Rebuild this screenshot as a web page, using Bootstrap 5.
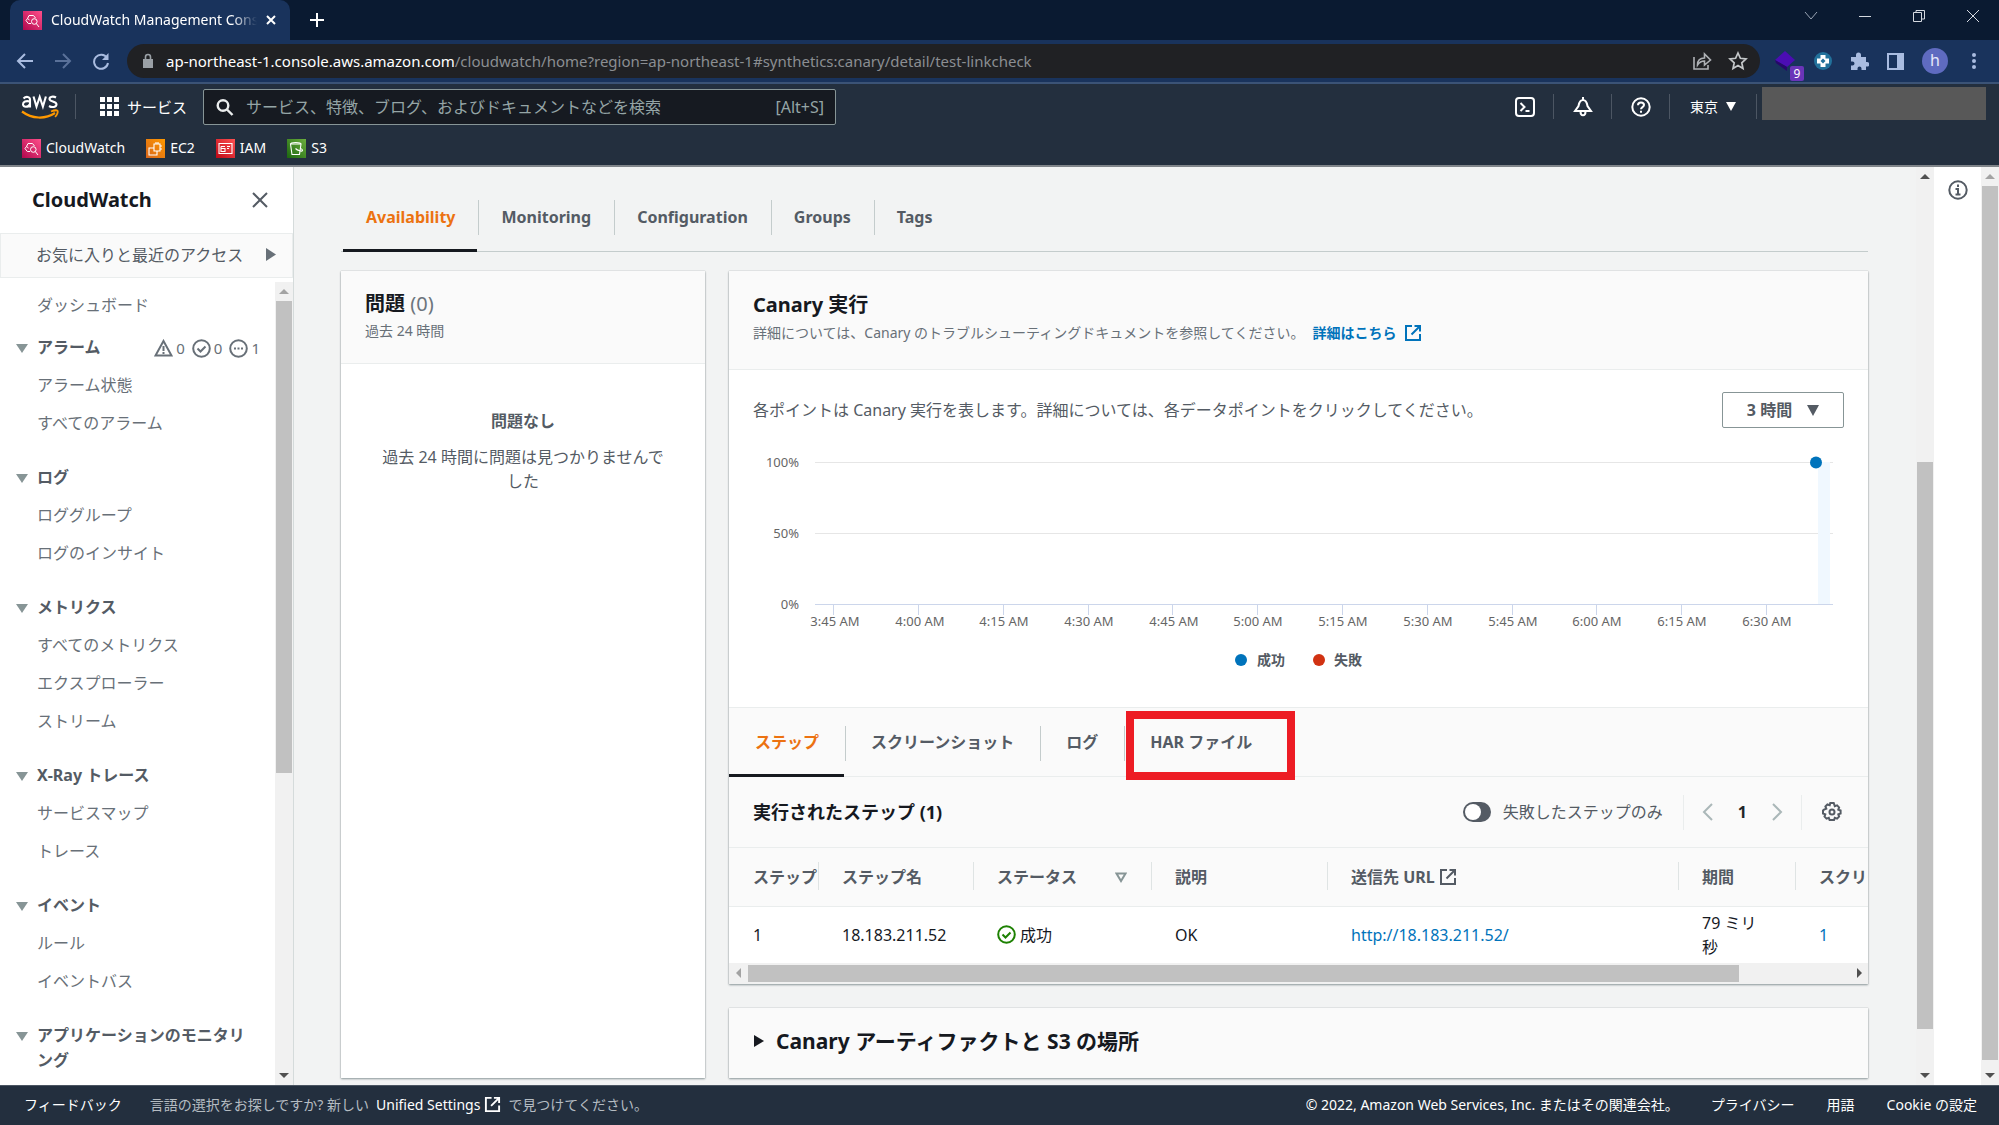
<!DOCTYPE html>
<html lang="ja">
<head>
<meta charset="utf-8">
<meta name="viewport" content="width=device-width, initial-scale=1">
<title>CloudWatch Management Console</title>
<link href="https://cdn.jsdelivr.net/npm/bootstrap@5.3.0/dist/css/bootstrap.min.css" rel="stylesheet">
<style>
body{height:100vh;overflow:hidden;font:16px/24px "Noto Sans","Noto Sans CJK JP",sans-serif;color:#545b64;background:#f2f3f3}
svg{display:block;flex:none}
a{text-decoration:none;color:inherit}
button{background:none;border:0;padding:0;color:inherit}
.tabstrip{height:40px;background:#0a1a31;color:#fff}
.btab{width:280px;height:40px;margin-left:10px;padding:0 13px;background:#19335c;border-radius:10px 10px 0 0;font-size:14px}
.btitle{width:206px;margin-left:9px;overflow:hidden;white-space:nowrap;-webkit-mask-image:linear-gradient(90deg,#000 88%,transparent)}
.winctl{gap:36px;padding-right:17px;color:#d5d9e0}
.urlrow{height:44px;background:#19335c;border-bottom:2px solid #3b5376;color:#a9bce0}
.navbtns{width:127px;padding-left:16px;gap:20px}
.urlpill{height:34px;border-radius:17px;background:#202124;color:#8b8e92;padding:0 12px 0 15px;font-size:15px}
.exts{width:239px;padding:0 17px 0 14px}
.extbadge{right:-8px;bottom:-9px;width:14px;height:15px;background:#6a35b8;color:#fff;font-size:12px;line-height:15px;border-radius:2px;text-align:center}
.avatar{width:26px;height:26px;border-radius:50%;background:#5f6bc0;color:#e6e8fa;line-height:25px;text-align:center}
.awsnav{height:47px;background:#232f3e;color:#fff;padding:0 13px 2px 21px}
.vsep{width:1px;height:25px;background:#4c5663}
.svc{font-size:15px}
.searchbox{width:633px;height:36px;margin-left:16px;border:1px solid #879596;border-radius:2px;background:#161a21;color:#95a5a6;padding:0 11px 0 12px}
.searchbox input{background:none;border:0;outline:0;color:inherit;padding:0}
.searchbox input::placeholder{color:#95a5a6;opacity:1}
.navicon{width:58px;border-right:1px solid #4c5663;height:25px}
.region{width:87px;font-size:14px;border-right:1px solid #4c5663;height:25px}
.masked{width:224px;height:33px;background:#585858;margin:0 0 6px 5px}
.favs{height:36px;background:#232f3e;border-bottom:2px solid #7f8489;color:#fff;font-size:14px;gap:21px;padding:0 22px}
.favs a{gap:5px}
.svcicon{width:19px;height:19px}
.side{width:294px;background:#fff;border-right:1px solid #d5dbdb}
.sidehead{height:66px;padding:0 25px 0 32px;color:#16191f;font-size:20px;font-weight:700}
.recent{height:45px;border:1px solid #eaeded;background:#fafafa;padding:0 16px 2px 35px}
.menu{padding:4px 0 0 37px;overflow:hidden}
.menu a,.menu .grp{display:block;height:38px;line-height:38px}
.menu a{color:#687078}
.menu section{margin-bottom:16px}
.grp{font-weight:700;font-size:16px;margin:0;position:relative;white-space:nowrap}
.grp::before{content:"";position:absolute;left:-21px;top:16px;border:6px solid transparent;border-top:9px solid #879596;border-bottom:0}
.menu .grp.tall{height:64px;line-height:25px;padding-top:7px;width:220px;white-space:normal}
.alarms{gap:3px;font-weight:400;font-size:15px;color:#687078;margin-right:15px;padding-top:2px}
.sbar{width:18px;background:#f1f1f1;flex:none}
.thumb{background:#c1c1c1;margin:0 1px}
.aup,.adn,.alf,.art{flex:none;width:18px;height:19px;display:flex;align-items:center;justify-content:center}
.aup::before,.adn::before,.alf::before,.art::before{content:"";border:5px solid transparent}
.aup::before{border-bottom-color:#a3a3a3;margin-bottom:5px}
.aup.dark::before{border-bottom-color:#505050}
.adn::before{border-top-color:#505050;margin-top:5px}
.alf::before{border-right-color:#a3a3a3;margin-right:5px}
.art::before{border-left-color:#505050;margin-left:5px}
.content{padding:15px 48px 7px 47px;overflow:hidden}
.maintabs{height:70px;border-bottom:1px solid #c4cccc;padding-left:2px}
.cards{padding-top:19px}
.ptabs{height:70px;background:#fafafa;border-top:1px solid #eaeded;border-bottom:1px solid #eaeded}
.ptab{position:relative;height:70px;padding:0 23px;line-height:70px;font-weight:700;white-space:nowrap}
.ptabs .ptab{padding:0 26px;height:69px;line-height:67px}
.ptab + .ptab::before,.harwrap .ptab::before{content:"";position:absolute;left:0;top:18px;height:35px;border-left:1px solid #c4cccc}
.ptab.on{color:#ec7211}
.ptab.on::after{content:"";position:absolute;left:0;right:1px;bottom:0;height:3px;background:#16191f}
.panelbox{background:#fff;box-shadow:0 1px 2px rgba(0,28,36,.4),0 0 1px rgba(0,28,36,.25)}
.phead{background:#fafafa;border-bottom:1px solid #eaeded;padding:18px 24px 0}
.chead{padding-bottom:24px}
.h20{font-size:20px;line-height:30px;font-weight:700;color:#16191f;margin:0}
.chead .h20{padding-top:1px}
.h21{font-size:21px}
.sub14{font-size:14px;line-height:24px;color:#687078;white-space:nowrap}
.chead .sub14{padding-top:1px}
.sub14 a{margin-left:8px}
.issues{width:364px;flex:none}
.nomsg{padding:45px 36px 0}
.pbody{padding:22px 24px 29px}
.btn3{width:122px;height:36px;border:1px solid #879596;border-radius:2px;font-weight:700;gap:15px;color:#545b64}
.lnk{color:#0073bb}
.harbox{left:2px;top:3px;width:169px;height:69px;border:8px solid #ed1c24;z-index:1;pointer-events:none}
.steptitle{font-size:18px;font-weight:700;color:#16191f}
.tools{height:70px;background:#fafafa;padding:0 26px 0 24px}
.tsep{width:1px;height:35px;background:#eaeded}
.sw{appearance:none;width:28px;height:20px;border-radius:10px;background:#545b64;margin:0;display:flex;align-items:center;padding:2px}
.sw::before{content:"";width:16px;height:16px;border-radius:50%;background:#fff}
.steps{width:1270px;table-layout:fixed;margin:0;border-collapse:collapse;color:#16191f}
.steps th{height:59px;background:#fafafa;border:1px solid #eaeded;border-width:1px 0;padding:0 0 0 24px;color:#545b64;font-weight:700;position:relative;white-space:nowrap;overflow:hidden}
.steps th + th::before{content:"";position:absolute;left:0;top:14px;height:28px;border-left:1px solid #dfe4e4}
.steps td{height:56px;padding:0 0 0 24px;vertical-align:middle}
.hbar{height:21px;background:#f1f1f1}
.foot{height:40px;background:#232f3e;border-top:1px solid #4b5562;color:#fff;font-size:14px;padding:0 22px 2px 24px;white-space:nowrap}
.dimtx{color:#b5bcc2;gap:7px}
</style>
<script src="https://cdn.jsdelivr.net/npm/bootstrap@5.3.0/dist/js/bootstrap.bundle.min.js"></script>
</head>
<body class="d-flex flex-column">
<svg width="0" height="0" class="position-absolute" aria-hidden="true">
<defs>
<linearGradient id="gp" x1="0" y1="1" x2="1" y2="0"><stop stop-color="#b0084d"/><stop offset="1" stop-color="#ff4f8b"/></linearGradient>
<linearGradient id="go" x1="0" y1="1" x2="1" y2="0"><stop stop-color="#d8661b"/><stop offset="1" stop-color="#ff9900"/></linearGradient>
<linearGradient id="gr" x1="0" y1="1" x2="1" y2="0"><stop stop-color="#bd0816"/><stop offset="1" stop-color="#ff5252"/></linearGradient>
<linearGradient id="gg" x1="0" y1="1" x2="1" y2="0"><stop stop-color="#1b660f"/><stop offset="1" stop-color="#6cae3e"/></linearGradient>
<symbol id="cw" viewBox="0 0 19 19"><path fill="url(#gp)" d="M0 0h19v19H0z"/><g fill="none" stroke="#fff" stroke-width="1"><path d="M8 12.500H5.300L3 9.500l1.500-2L6 4.500h4.500L12.500 7M4.500 7.500l2 1.500"/><circle cx="11.300" cy="10.500" r="2.800"/><path d="m13.300 12.500 2.700 3.500"/></g></symbol>
<symbol id="ext" viewBox="0 0 18 18"><path d="M8 2H2v14h14v-6M10.500 2H16v5.500M16 2 7.500 10.500" fill="none" stroke="currentColor" stroke-width="2"/></symbol>
</defs>
</svg>

<div class="tabstrip d-flex align-items-center flex-shrink-0">
  <div class="btab d-flex align-items-center">
    <svg width="19" height="19"><use href="#cw"/></svg>
    <span class="btitle">CloudWatch Management Console</span>
    <button class="ms-auto" aria-label="タブを閉じる"><svg width="12" height="12"><path d="m2 2 8 8M10 2l-8 8" stroke="#fff" stroke-width="2"/></svg></button>
  </div>
  <button class="ms-3 ps-1" aria-label="新しいタブ"><svg width="14" height="14"><path d="M7 0v14M0 7h14" stroke="#fff" stroke-width="2"/></svg></button>
  <div class="winctl d-flex align-items-center ms-auto pb-2">
    <svg width="18" height="14"><path d="m3 3 6 7 6-7" fill="none" stroke="#9aa5b5"/></svg>
    <svg width="18" height="14"><path d="M3 7.500h12" stroke="currentColor"/></svg>
    <svg width="18" height="14"><path d="M3.500 3.500h8v9h-8zM6 3V1.500h8.500V10H12" fill="none" stroke="currentColor"/></svg>
    <svg width="18" height="14"><path d="m3 1 12 12M15 1 3 13" stroke="currentColor"/></svg>
  </div>
</div>

<div class="urlrow d-flex align-items-center flex-shrink-0">
  <div class="navbtns d-flex">
    <svg width="18" height="18" fill="none" stroke="currentColor" stroke-width="2"><path d="M17 9H3M9 2 2 9l7 7"/></svg>
    <svg width="18" height="18" fill="none" stroke="#5a7199" stroke-width="2"><path d="M1 9h14M9 2l7 7-7 7"/></svg>
    <svg width="18" height="18" fill="none" stroke="currentColor" stroke-width="2"><path d="M15 6a7 7 0 1 0 1 5"/><path d="M16.500 1v7H10z" fill="currentColor" stroke="none"/></svg>
  </div>
  <div class="urlpill d-flex align-items-center flex-grow-1">
    <svg width="12" height="16" class="me-2"><path d="M1 6h10v9H1z" fill="#9aa0a6"/><path d="M3.500 6V4a2.500 2.500 0 0 1 5 0v2" fill="none" stroke="#9aa0a6" stroke-width="1.600"/></svg>
    <span class="text-nowrap ms-1"><span class="text-white">ap-northeast-1.console.aws.amazon.com</span>/cloudwatch/home?region=ap-northeast-1#synthetics:canary/detail/test-linkcheck</span>
    <svg class="ms-auto" width="20" height="20" fill="none" stroke="#aeb1b5" stroke-width="1.600"><path d="M2 6v12h14v-4"/><path d="M5.500 14c0-5 3-7 7-7V3l6 6-6 5v-4c-3 0-5 1-7 4z"/></svg>
    <svg class="ms-3" width="20" height="20"><path d="m10 2 2.400 5.300 5.600.6-4.200 3.900 1.200 5.700-5-2.900-5 2.900 1.200-5.700L2 7.900l5.600-.6z" fill="none" stroke="#c4c7c9" stroke-width="1.700"/></svg>
  </div>
  <div class="exts d-flex align-items-center justify-content-between">
    <span class="position-relative"><svg width="22" height="22"><path d="m11 1 10 9-8 7L1 10z" fill="#4b0db3"/><path d="m1 10 12 7v4L2 13z" fill="#27066b"/></svg><span class="extbadge position-absolute">9</span></span>
    <svg width="18" height="18"><circle cx="9" cy="9" r="9" fill="#22719b"/><path d="M6.500 3h5v3.500H15v5h-3.500V15h-5v-3.500H3v-5h3.500z" fill="#fff"/><path d="m9 6.500 2.500 2.500L9 11.500 6.500 9z" fill="#22719b"/></svg>
    <svg width="19" height="19"><path d="M1 5h5V3a2.500 2.500 0 0 1 5 0v2h5v5h1a2.300 2.300 0 0 1 0 4.600h-1V18h-4.500v-1.500a2 2 0 0 0-4 0V18H1v-4.500h1.500a2 2 0 0 0 0-4H1z" fill="currentColor"/></svg>
    <svg width="17" height="17"><path d="M1 1h15v15H1z" fill="none" stroke="currentColor" stroke-width="2"/><path d="M10 1h6v15h-6z" fill="currentColor"/></svg>
    <span class="avatar">h</span>
    <svg width="16" height="18" fill="currentColor"><circle cx="8" cy="3" r="2"/><circle cx="8" cy="9" r="2"/><circle cx="8" cy="15" r="2"/></svg>
  </div>
</div>

<header class="awsnav d-flex align-items-center flex-shrink-0">
  <a href="#" aria-label="aws"><svg width="38" height="26" viewBox="0 0 38 26"><g fill="none" stroke="#fff" stroke-width="2.100"><path d="M2.500 4.500C5 2 9 2.500 9 5.500v8M9 7.500c-4-1-7 0-7 2.700 0 3.600 5.500 3.300 7-.2"/><path d="m12.500 2.500 3 10 3.200-9.500 3.200 9.500 3-10"/><path d="M35 3.500c-2.500-1.500-6.500-1-6.500 1.500 0 3 7 2 7 5.300 0 3-4.500 3.500-7.500 1.700"/></g><path d="M1 17.500c10 7.500 23 8 33 1.500" fill="none" stroke="#f90" stroke-width="2.200"/><path d="M30 17.500c3-1.300 6-1.200 6.500-.6.600.8-.2 4-2.500 6" fill="none" stroke="#f90" stroke-width="1.800"/></svg></a>
  <span class="vsep ms-3 me-3"></span>
  <button class="svc d-flex align-items-center gap-2 ms-2"><svg width="19" height="19" fill="#fff"><path d="M0 0h5v5H0zM7 0h5v5H7zM14 0h5v5h-5zM0 7h5v5H0zM7 7h5v5H7zM14 7h5v5h-5zM0 14h5v5H0zM7 14h5v5H7zM14 14h5v5h-5z"/></svg>サービス</button>
  <label class="searchbox d-flex align-items-center">
    <svg width="18" height="18" fill="none" stroke="#eaeded" stroke-width="2.400"><circle cx="7" cy="7.500" r="5.300"/><path d="m11 11.500 5.500 5.500"/></svg>
    <input class="flex-grow-1 mx-2 ps-1" type="text" aria-label="検索" placeholder="サービス、特徴、ブログ、およびドキュメントなどを検索">
    <span>[Alt+S]</span>
  </label>
  <div class="d-flex align-items-center ms-auto">
    <button class="navicon d-flex align-items-center justify-content-center" aria-label="CloudShell"><svg width="20" height="20" fill="none" stroke="#fff" stroke-width="2"><rect x="1" y="1" width="18" height="18" rx="3"/><path d="m5.500 6 4 4-4 4M10.500 14h4"/></svg></button>
    <button class="navicon d-flex align-items-center justify-content-center" aria-label="通知"><svg width="20" height="20" fill="none" stroke="#fff" stroke-width="2"><path d="M10 0v3M10 3C6.500 3 6 6 5.500 9L2 14h16l-3.500-5C14 6 13.500 3 10 3zM7.500 14.500c0 5 5 5 5 0"/></svg></button>
    <button class="navicon d-flex align-items-center justify-content-center" aria-label="ヘルプ"><svg width="20" height="20" fill="none" stroke="#fff" stroke-width="2"><circle cx="10" cy="10" r="8.700"/><path d="M7 8.200C7 4.500 13 4.700 13 8c0 2.200-3 2-3 4.200M10 13.700v2"/></svg></button>
    <button class="region d-flex align-items-center justify-content-center gap-2">東京<svg width="10" height="9"><path d="M0 0h10L5 9z" fill="#fff"/></svg></button>
    <div class="masked"></div>
  </div>
</header>
<nav class="favs d-flex align-items-center flex-shrink-0">
  <a href="#" class="d-flex align-items-center"><svg class="svcicon"><use href="#cw"/></svg>CloudWatch</a>
  <a href="#" class="d-flex align-items-center"><svg class="svcicon" viewBox="0 0 19 19"><path fill="url(#go)" d="M0 0h19v19H0z"/><path d="M8 5h6v7H8zM11 12v4H3V9h5M10 5V3M12 5V3M14 7h2M14 10h2" fill="none" stroke="#fff" stroke-width="1.100"/></svg>EC2</a>
  <a href="#" class="d-flex align-items-center"><svg class="svcicon" viewBox="0 0 19 19"><path fill="url(#gr)" d="M0 0h19v19H0z"/><path d="M3 4.500h13v10H3zM5 7.500h4M5 9.500h4v3H5zM11 7.500h3M11 9.500h2M5 12.500v-5" fill="none" stroke="#fff" stroke-width="1.100"/></svg>IAM</a>
  <a href="#" class="d-flex align-items-center"><svg class="svcicon" viewBox="0 0 19 19"><path fill="url(#gg)" d="M0 0h19v19H0z"/><path d="M3.500 5 5 15.500h7.500L14 5zM3.500 5c0-2 10.500-2 10.500 0M8.500 9.500c2 2 7 3.500 7 2s-2-2-2-2" fill="none" stroke="#fff" stroke-width="1.100"/></svg>S3</a>
</nav>

<div class="d-flex flex-grow-1 overflow-hidden">
  <aside class="side d-flex flex-column flex-shrink-0">
    <div class="sidehead d-flex align-items-center justify-content-between flex-shrink-0">CloudWatch<button aria-label="閉じる"><svg width="16" height="16"><path d="m1 1 14 14M15 1 1 15" stroke="#545b64" stroke-width="2"/></svg></button></div>
    <button class="recent d-flex align-items-center justify-content-between flex-shrink-0">お気に入りと最近のアクセス<svg width="10" height="13"><path d="M0 0v13l10-6.500z" fill="#687078"/></svg></button>
    <div class="d-flex flex-grow-1 overflow-hidden pt-1">
      <div class="menu flex-grow-1">
        <a href="#" class="mb-1">ダッシュボード</a>
        <section>
          <div class="grp d-flex align-items-center justify-content-between">アラーム
            <span class="alarms d-flex align-items-center">
              <svg width="19" height="18" fill="none" stroke="currentColor" stroke-width="2"><path d="M9.500 2 1.500 16.500h16zM9.500 7v5M9.500 13v2"/></svg>0
              <svg class="ms-1" width="19" height="19" fill="none" stroke="currentColor" stroke-width="2"><circle cx="9.500" cy="9.500" r="8.300"/><path d="m5.500 9.500 3 3 5-5"/></svg>0
              <svg class="ms-1" width="19" height="19" fill="none" stroke="currentColor" stroke-width="2"><circle cx="9.500" cy="9.500" r="8.300"/><path d="M5 9.500h2M8.500 9.500h2M12 9.500h2"/></svg>1
            </span>
          </div>
          <a href="#">アラーム状態</a><a href="#">すべてのアラーム</a>
        </section>
        <section><div class="grp">ログ</div><a href="#">ロググループ</a><a href="#">ログのインサイト</a></section>
        <section><div class="grp">メトリクス</div><a href="#">すべてのメトリクス</a><a href="#">エクスプローラー</a><a href="#">ストリーム</a></section>
        <section><div class="grp">X-Ray トレース</div><a href="#">サービスマップ</a><a href="#">トレース</a></section>
        <section><div class="grp">イベント</div><a href="#">ルール</a><a href="#">イベントバス</a></section>
        <section><div class="grp tall">アプリケーションのモニタリング</div></section>
      </div>
      <div class="sbar d-flex flex-column"><span class="aup"></span><div class="thumb" style="height:472px"></div><span class="adn mt-auto"></span></div>
    </div>
  </aside>

  <main class="content flex-grow-1 d-flex flex-column">
    <div class="maintabs d-flex flex-shrink-0">
      <button class="ptab on">Availability</button><button class="ptab">Monitoring</button><button class="ptab">Configuration</button><button class="ptab">Groups</button><button class="ptab">Tags</button>
    </div>
    <div class="cards d-flex flex-grow-1 gap-4">
      <section class="panelbox issues">
        <div class="phead pb-3"><h2 class="h20">問題 <span class="fw-normal text-secondary">(0)</span></h2><div class="sub14 pb-1">過去 24 時間</div></div>
        <div class="nomsg text-center"><div class="fw-bold mb-2 pb-1">問題なし</div>過去 24 時間に問題は見つかりませんでした</div>
      </section>
      <div class="flex-grow-1 d-flex flex-column gap-4" style="min-width:0">
        <section class="panelbox">
          <div class="phead chead"><h2 class="h20">Canary 実行</h2><div class="sub14 d-flex align-items-center">詳細については、Canary のトラブルシューティングドキュメントを参照してください。<a href="#" class="lnk fw-bold d-flex align-items-center gap-2">詳細はこちら <svg width="18" height="18"><use href="#ext"/></svg></a></div></div>
          <div class="pbody">
            <div class="d-flex align-items-center justify-content-between"><span>各ポイントは Canary 実行を表します。詳細については、各データポイントをクリックしてください。</span>
              <button class="btn3 d-flex align-items-center justify-content-center">3 時間<svg width="12" height="11"><path d="M0 0h12L6 11z" fill="#545b64"/></svg></button></div>
            <svg viewBox="0 0 1091 250" class="w-100" font-size="13" fill="#666">
              <path d="M62 34.500h1018M62 105.500h1018" stroke="#e6e6e6"/>
              <path d="M1065 34h12v142h-12z" fill="#f0f8ff"/>
              <path d="M62 176.500h1018M80.500 176v11M165.500 176v11M250.500 176v11M335.500 176v11M419.500 176v11M504.500 176v11M589.500 176v11M674.500 176v11M759.500 176v11M843.500 176v11M928.500 176v11M1013.500 176v11" stroke="#ccd6eb" fill="none"/>
              <g text-anchor="end"><text x="46" y="39">100%</text><text x="46" y="110">50%</text><text x="46" y="181">0%</text></g>
              <g text-anchor="middle"><text x="82" y="198">3:45 AM</text><text x="167" y="198">4:00 AM</text><text x="251" y="198">4:15 AM</text><text x="336" y="198">4:30 AM</text><text x="421" y="198">4:45 AM</text><text x="505" y="198">5:00 AM</text><text x="590" y="198">5:15 AM</text><text x="675" y="198">5:30 AM</text><text x="760" y="198">5:45 AM</text><text x="844" y="198">6:00 AM</text><text x="929" y="198">6:15 AM</text><text x="1014" y="198">6:30 AM</text></g>
              <circle cx="1063" cy="34.500" r="6" fill="#0073bb"/>
              <circle cx="488" cy="232" r="6" fill="#0073bb"/><circle cx="566" cy="232" r="6" fill="#d13212"/>
              <g font-size="14" font-weight="700" fill="#545b64"><text x="504" y="237">成功</text><text x="581" y="237">失敗</text></g>
            </svg>
          </div>
          <div class="ptabs d-flex">
            <button class="ptab on">ステップ</button><button class="ptab">スクリーンショット</button><button class="ptab">ログ</button><div class="harwrap position-relative"><button class="ptab">HAR ファイル</button><span class="harbox position-absolute"></span></div>
          </div>
          <div class="tools d-flex align-items-center">
            <span class="steptitle">実行されたステップ (1)</span>
            <div class="ms-auto d-flex align-items-center">
              <input class="sw" type="checkbox" role="switch" id="failonly"><label class="ms-2 me-3 px-1" for="failonly">失敗したステップのみ</label>
              <span class="tsep"></span>
              <button class="ms-3" aria-label="前へ"><svg width="14" height="20"><path d="m12 2-8 8 8 8" fill="none" stroke="#aab7b8" stroke-width="2"/></svg></button>
              <strong class="mx-4 text-dark">1</strong>
              <button class="me-3" aria-label="次へ"><svg width="14" height="20"><path d="m2 2 8 8-8 8" fill="none" stroke="#aab7b8" stroke-width="2"/></svg></button>
              <span class="tsep me-3"></span>
              <button class="ms-1" aria-label="設定"><svg width="20" height="20" fill="none" stroke="#545b64" stroke-width="2"><path d="m8.300 1-.6 2.300-2.300-.8-2 2 .9 2.200L2 7.700 1 8.500v3l2.300.8-.8 2.300 2 2 2.300-.8.8 2.200h4.400l.8-2.200 2.300.8 2-2-.8-2.300 2.300-.8v-3l-2.300-.8.8-2.300-2-2-2.300.8L11.700 1z"/><circle cx="10" cy="10" r="2.500"/></svg></button>
            </div>
          </div>
          <div class="overflow-hidden">
            <table class="steps">
              <colgroup><col style="width:89px"><col style="width:155px"><col style="width:178px"><col style="width:176px"><col style="width:351px"><col style="width:117px"><col></colgroup>
              <thead><tr><th>ステップ</th><th>ステップ名</th><th><div class="d-flex align-items-center justify-content-between pe-4">ステータス<svg width="12" height="11"><path d="M1.500 1.500h9L6 9z" fill="none" stroke="#879596" stroke-width="2"/></svg></div></th><th>説明</th><th><div class="d-flex align-items-center gap-1">送信先 URL<svg width="18" height="18"><use href="#ext"/></svg></div></th><th>期間</th><th>スクリーンショット</th></tr></thead>
              <tbody><tr><td>1</td><td>18.183.211.52</td><td><div class="d-flex align-items-center gap-1"><svg width="19" height="19" fill="none" stroke="#1d8102" stroke-width="2"><circle cx="9.500" cy="9.500" r="8.300"/><path d="m5.500 9.500 3 3 5-5"/></svg>成功</div></td><td>OK</td><td><a href="#" class="lnk">http://18.183.211.52/</a></td><td class="pe-4">79 ミリ秒</td><td><a href="#" class="lnk">1</a></td></tr></tbody>
            </table>
          </div>
          <div class="hbar d-flex align-items-center"><span class="alf"></span><div class="thumb" style="width:87%;height:17px"></div><span class="art ms-auto"></span></div>
        </section>
        <section class="panelbox flex-grow-1 phead pb-3 border-0"><button class="h20 h21 d-flex align-items-center gap-2"><svg width="15" height="12"><path d="M1 0v12l10-6z" fill="#16191f"/></svg>Canary アーティファクトと S3 の場所</button></section>
      </div>
    </div>
  </main>
  <div class="sbar d-flex flex-column"><span class="aup dark"></span><div class="flex-grow-1"><div class="thumb" style="height:567px;margin-top:276px"></div></div><span class="adn"></span></div>
  <div class="bg-white d-flex justify-content-center pt-2 flex-shrink-0" style="width:47px"><button class="align-self-start mt-1" aria-label="情報"><svg width="20" height="22" fill="none" stroke="#545b64" stroke-width="2"><circle cx="10" cy="11" r="8.700"/><path d="M10 5.500V8M7.500 10H10v5.500M7.500 15.500h5"/></svg></button></div>
  <div class="sbar d-flex flex-column"><span class="aup"></span><div class="thumb" style="height:874px"></div><span class="adn mt-auto"></span></div>
</div>

<footer class="foot d-flex align-items-center flex-shrink-0">
  <a href="#">フィードバック</a>
  <span class="dimtx ms-4 ps-1 d-flex align-items-center">言語の選択をお探しですか? 新しい <a href="#" class="text-white d-flex align-items-center gap-1">Unified Settings <svg width="17" height="17"><use href="#ext"/></svg></a> で見つけてください。</span>
  <span class="ms-auto">© 2022, Amazon Web Services, Inc. またはその関連会社。</span>
  <a href="#" class="ms-4 ps-2">プライバシー</a><a href="#" class="ms-4 ps-2">用語</a><a href="#" class="ms-4 ps-2">Cookie の設定</a>
</footer>
</body>
</html>
